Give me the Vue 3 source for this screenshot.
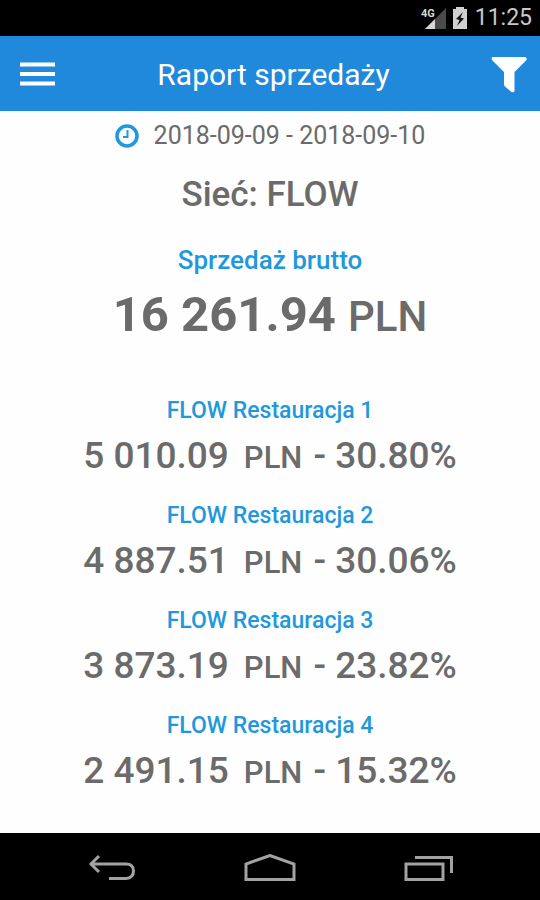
<template>
  <div class="screen">
    <!-- System status bar -->
    <div class="status-bar">
      <svg class="signal-icon" width="26" height="24" viewBox="0 0 26 24" aria-hidden="true">
        <path d="M25 2V23H4Z" fill="#4a4a4a" />
        <path d="M14 13V23H4Z" fill="#d6d6d6" />
        <text class="network" x="0" y="11">4G</text>
      </svg>
      <svg class="battery-icon" width="16" height="24" viewBox="0 0 16 24" aria-hidden="true">
        <path d="M4 1H12V3H15V23H1V3H4Z" fill="#d0d0d0" />
        <path d="M11 6L4 13L7.500 14L5 20L12 12.500L8.500 11.500Z" fill="#111" />
      </svg>
      <span class="clock">11:25</span>
    </div>

    <header class="app-bar">
      <button class="icon-button" type="button" aria-label="Menu">
        <svg width="36" height="26" viewBox="0 0 36 26">
          <path d="M0 3.500H35M0 13H35M0 22.500H35" stroke="#fff" stroke-width="4" />
        </svg>
      </button>
      <h1 class="title">Raport sprzedaży</h1>
      <button class="icon-button" type="button" aria-label="Filtr">
        <svg width="36" height="38" viewBox="0 0 36 38">
          <path
            d="M1.500 2H34.500Q36 2.500 35.500 5L23.500 17V36Q23 38 20.500 37L14 31.500Q13 30.500 13 29.500V17L1 5Q0 2.500 1.500 2Z"
            fill="#fff"
          />
        </svg>
      </button>
    </header>

    <main class="report">
      <p class="period">
        <svg width="24" height="24" viewBox="0 0 24 24" aria-hidden="true">
          <circle cx="12" cy="12" r="10" fill="none" stroke="#1f98dc" stroke-width="3.500" />
          <path d="M12.500 6V13H8" fill="none" stroke="#1f98dc" stroke-width="2" />
        </svg>
        <span>{{ period }}</span>
      </p>
      <h2 class="network-name">Sieć: FLOW</h2>

      <section class="total">
        <h3 class="total-label">Sprzedaż brutto</h3>
        <p class="total-value">16 261.94 <span class="total-currency">PLN</span></p>
      </section>

      <ul class="restaurants">
        <li v-for="item in restaurants" :key="item.name" class="restaurant">
          <h3 class="restaurant-name">{{ item.name }}</h3>
          <p class="restaurant-value">
            <span class="amount">{{ item.amount }}</span>
            <span class="currency">PLN</span>
            <span>- {{ item.share }}</span>
          </p>
        </li>
      </ul>
    </main>

    <!-- System navigation -->
    <nav class="nav-bar">
      <button class="nav-button" type="button" aria-label="Wstecz">
        <svg width="48" height="28" viewBox="0 0 48 28">
          <path d="M11 2L3 10L11 18M3 10H38Q45.500 10 45.500 17T38 24.500H21" />
        </svg>
      </button>
      <button class="nav-button" type="button" aria-label="Ekran główny">
        <svg width="52" height="28" viewBox="0 0 52 28">
          <path d="M2 25.500V10L26 1.500L50 10V25.500Z" />
        </svg>
      </button>
      <button class="nav-button" type="button" aria-label="Ostatnie aplikacje">
        <svg width="50" height="28" viewBox="0 0 50 28">
          <path d="M2 10H39V25.500H2ZM11 3.500H47.500V19" />
        </svg>
      </button>
    </nav>
  </div>
</template>

<script setup>
const period = '2018-09-09 - 2018-09-10'

const restaurants = [
  { name: 'FLOW Restauracja 1', amount: '5 010.09', share: '30.80%' },
  { name: 'FLOW Restauracja 2', amount: '4 887.51', share: '30.06%' },
  { name: 'FLOW Restauracja 3', amount: '3 873.19', share: '23.82%' },
  { name: 'FLOW Restauracja 4', amount: '2 491.15', share: '15.32%' }
]
</script>

<style>
body {
  margin: 0;
}
</style>

<style scoped>
.screen {
  display: flex;
  flex-direction: column;
  min-height: 100vh;
  background: #fefefe;
  color: #6b6b6b;
  font-family: Roboto, "Liberation Sans", sans-serif;
}

h1,
h2,
h3,
p,
ul {
  margin: 0;
  padding: 0;
  font-weight: 500;
}

.status-bar {
  display: flex;
  align-items: center;
  justify-content: flex-end;
  gap: 7px;
  height: 36px;
  padding: 0 8px;
  background: #000;
  color: #c8c8c8;
}

.signal-icon {
  margin-right: -2px;
}

.network {
  fill: #d6d6d6;
  font-size: 11px;
  font-weight: 700;
}

.clock {
  font-size: 23px;
  line-height: 28px;
}

.app-bar {
  display: flex;
  align-items: center;
  justify-content: space-between;
  height: 75px;
  padding: 0 13px 0 20px;
  background: #2189dc;
  color: #fff;
}

.icon-button,
.nav-button {
  display: flex;
  padding: 0;
  border: 0;
  background: none;
  cursor: pointer;
}

.title {
  padding-top: 3px;
  font-size: 30px;
  font-weight: 400;
  line-height: 36px;
}

.report {
  flex: 1;
  padding: 10px 16px 24px;
  text-align: center;
}

.period {
  display: flex;
  align-items: center;
  justify-content: center;
  gap: 15px;
  font-size: 25px;
  font-weight: 400;
  line-height: 30px;
}

.network-name {
  margin-top: 22px;
  font-size: 35px;
  line-height: 44px;
}

.total {
  margin-top: 27px;
}

.total-label,
.restaurant-name {
  color: #1f98dc;
}

.total-label {
  font-size: 26px;
  line-height: 32px;
}

.total-value {
  margin-top: 9px;
  font-size: 49px;
  font-weight: 700;
  line-height: 60px;
}

.total-currency {
  font-size: 42px;
  font-weight: 500;
}

.restaurants {
  display: flex;
  flex-direction: column;
  gap: 22px;
  margin-top: 50px;
  list-style: none;
}

.restaurant-name {
  font-size: 23px;
  line-height: 28px;
}

.restaurant-value {
  display: flex;
  align-items: baseline;
  justify-content: center;
  gap: 11px;
  margin-top: 9px;
  font-size: 37px;
  line-height: 44px;
}

.amount {
  padding-right: 4px;
}

.currency {
  font-size: 31px;
}

.nav-bar {
  display: flex;
  align-items: center;
  justify-content: space-between;
  box-sizing: border-box;
  height: 67px;
  padding: 3px 86px 0 88px;
  background: #000;
}

.nav-button path {
  fill: none;
  stroke: #a3a1a1;
  stroke-width: 3;
}
</style>
